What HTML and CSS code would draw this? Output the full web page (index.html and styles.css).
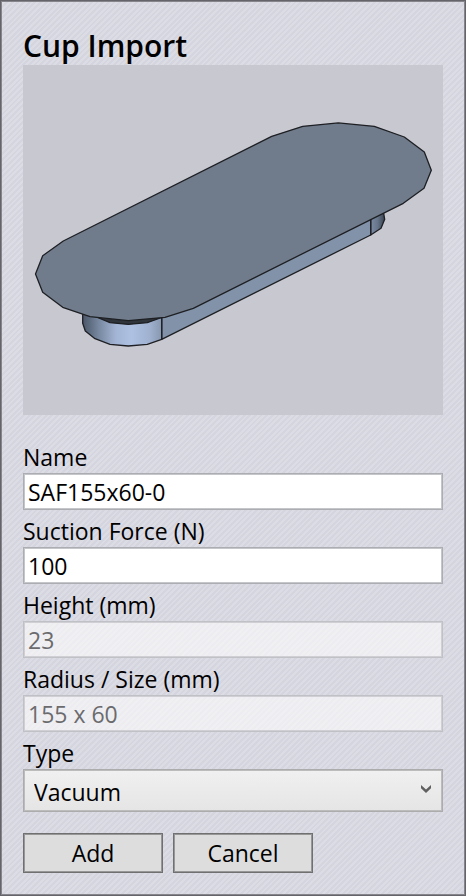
FILE: index.html
```html
<!DOCTYPE html>
<html lang="en">
<head>
    <meta charset="UTF-8" />
    <meta name="viewport" content="width=device-width, initial-scale=1.0"/>
    <title>Cup Import</title>
    <link rel="stylesheet" href="styles.css">
</head>
<body>

<main class="dialog">
    <h1>Cup Import</h1>

    <!-- Cup preview -->
    <svg class="preview" viewBox="23 65 420 350" role="img" aria-label="Cup preview">
        <defs>
            <linearGradient id="cupFront" x1="0" x2="1" y1="0" y2="0">
                <stop offset="0" stop-color="#4b5667"/>
                <stop offset="0.2" stop-color="#76879f"/>
                <stop offset="0.42" stop-color="#a3b5d4"/>
                <stop offset="0.62" stop-color="#afc1e2"/>
                <stop offset="0.85" stop-color="#9fb1cf"/>
                <stop offset="1" stop-color="#8797b0"/>
            </linearGradient>
            <linearGradient id="cupBack" x1="0" x2="1" y1="0" y2="0">
                <stop offset="0" stop-color="#7b8ba2"/>
                <stop offset="0.5" stop-color="#66758a"/>
                <stop offset="1" stop-color="#39424f"/>
            </linearGradient>
        </defs>
        <g stroke="#1d1f23" stroke-width="1.3" stroke-linejoin="round">
            <!-- Body -->
            <path fill="url(#cupBack)" d="M370.7 215V235L381 228.3L384.7 219.3L383.3 211Z"/>
            <path fill="#8292a9" d="M161.7 315V339.3L370.7 235V215Z"/>
            <path fill="url(#cupFront)" d="M82.7 312V323.3L85.3 331L95 338.7L110 344.3L128.3 346L147.3 344.3L161.7 339.3V312Z"/>
            <path fill="#30353c" d="M94 316L110 322.7L128.3 324.4L147.3 322.7L163 317Z"/>
            <!-- Lip -->
            <path fill="#707c8b" d="M271.7 136.3L302.7 126.3L338.3 122.9L374.3 126.3L404.3 137L424.3 152L431.3 170.3L424 188.3L403.3 203.3L193.3 308.3L165 317.3L128.3 320.7L90 316.7L62.7 307.3L42.7 292.3L35.5 274L42.7 255.7L63.3 241Z"/>
        </g>
    </svg>

    <!-- Cup data -->
    <form>
        <div class="field">
            <label for="name">Name</label>
            <input type="text" id="name" value="SAF155x60-0">
        </div>
        <div class="field">
            <label for="force">Suction Force (N)</label>
            <input type="text" id="force" value="100">
        </div>
        <div class="field">
            <label for="height">Height (mm)</label>
            <input type="text" id="height" value="23" disabled>
        </div>
        <div class="field">
            <label for="size">Radius / Size (mm)</label>
            <input type="text" id="size" value="155 x 60" disabled>
        </div>
        <div class="field">
            <label for="type">Type</label>
            <div class="select-wrap">
                <select id="type">
                    <option>Vacuum</option>
                </select>
                <svg class="arrow" viewBox="0 0 10 8" aria-hidden="true">
                    <path d="M0 0L5 4.4L10 0V3.2L5 8L0 3.2Z" fill="#606060"/>
                </svg>
            </div>
        </div>

        <div class="buttons">
            <button type="button">Add</button>
            <button type="button">Cancel</button>
        </div>
    </form>
</main>

</body>
</html>
```
FILE: styles.css
```css
* {
    box-sizing: border-box;
}

body {
    margin: 0;
    font-family: "Open Sans", "Noto Sans", sans-serif;
    font-size: 23px;
    color: #000;
}

.dialog {
    min-height: 100vh;
    padding: 22px;
    border: 1px solid #65646a;
    box-shadow: inset 0 0 0 1px #86858c;
    background: repeating-linear-gradient(135deg, #d5d5df 0, #d5d5df 2px, #dcdce4 2px, #dcdce4 4px);
}

h1 {
    margin: 0;
    padding-top: 4px;
    font-size: 30px;
    font-weight: 600;
    line-height: 38px;
}

.preview {
    display: block;
    width: 100%;
    background: #c8c8d1;
}

form {
    margin-top: 21px;
}

.field {
    display: flex;
    flex-direction: column;
}

label {
    padding-top: 5px;
    line-height: 32px;
}

input, select, button {
    font: inherit;
    color: inherit;
    border-radius: 0;
}

input {
    width: 100%;
    height: 37px;
    padding: 0 4px;
    border: 1px solid #abadb3;
    box-shadow: inset 0 0 0 1px #c4c6ca;
    background: #fff;
}

input:disabled {
    color: #6b6b6e;
    border-color: #c0c0c7;
    box-shadow: inset 0 0 0 1px #cfcfd4;
    background: rgba(255, 255, 255, 0.56);
}

.select-wrap {
    position: relative;
}

select {
    display: block;
    width: 100%;
    height: 43px;
    padding: 2px 10px 0;
    border: 1px solid #acacac;
    box-shadow: inset 0 0 0 1px #bcbcbc;
    background: linear-gradient(to bottom, #f0f0f0, #e5e5e5);
    appearance: none;
}

.arrow {
    position: absolute;
    top: 16px;
    right: 12px;
    width: 10px;
    height: 8px;
    pointer-events: none;
}

.buttons {
    display: flex;
    gap: 10px;
    margin-top: 21px;
}

button {
    width: 140px;
    height: 40px;
    padding: 0;
    border: 1px solid #707070;
    box-shadow: inset 0 0 0 1px #979797;
    background: #ddd;
}
```
